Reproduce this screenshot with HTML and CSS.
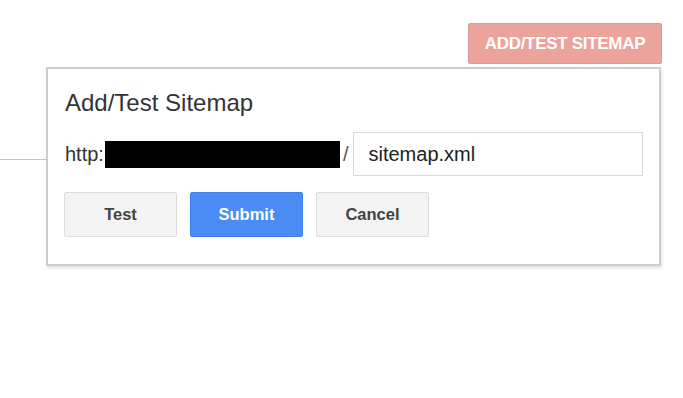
FILE: index.html
```html
<!DOCTYPE html>
<html>
<head>
<meta charset="utf-8">
<link rel="stylesheet" href="styles.css">
</head>
<body>
<div class="page">
  <div class="toolbar">
    <button class="btn-add">ADD/TEST SITEMAP</button>
  </div>
  <div class="rule"></div>
</div>
<div class="dialog">
  <div class="title">Add/Test Sitemap</div>
  <div class="url-row">
    <span class="prefix">http:</span>
    <span class="redacted"></span>
    <span class="slash">/</span>
    <input class="path" type="text" value="sitemap.xml">
  </div>
  <div class="actions">
    <button class="btn">Test</button>
    <button class="btn btn-primary">Submit</button>
    <button class="btn">Cancel</button>
  </div>
</div>
</body>
</html>
```
FILE: styles.css
```css
html, body {
  margin: 0;
  padding: 0;
  background: #fff;
  font-family: "Liberation Sans", Arial, sans-serif;
  width: 683px;
  height: 398px;
  overflow: hidden;
}
.page {
  position: relative;
  height: 398px;
}
.toolbar {
  display: flex;
  justify-content: flex-end;
  padding: 23px 21px 0 0;
}
.btn-add {
  width: 194px;
  height: 41px;
  background: #eca39b;
  border: 1px solid #e3968e;
  border-radius: 2px;
  color: #fff;
  font-family: "Liberation Sans", Arial, sans-serif;
  font-weight: bold;
  font-size: 17px;
  letter-spacing: -0.3px;
  padding: 0;
}
.rule {
  margin-top: 95px;
  width: 300px;
  height: 1px;
  background: #c4c4c4;
}
.dialog {
  position: absolute;
  left: 46px;
  top: 67px;
  width: 579px;
  border: 2px solid #cdcdcd;
  background: #fff;
  box-shadow: 1px 2px 3px rgba(0,0,0,0.12);
  padding: 20px 16px 27px 16px;
}
.title {
  font-size: 24px;
  line-height: 28px;
  color: #333;
  margin-left: 1px;
}
.url-row {
  display: flex;
  align-items: center;
  margin-top: 15px;
  height: 44px;
}
.prefix {
  font-size: 20px;
  color: #333;
  line-height: 23px;
  margin-left: 1px;
}
.redacted {
  display: block;
  width: 235px;
  height: 27px;
  background: #000;
  margin-left: 1px;
}
.slash {
  font-size: 20px;
  color: #555;
  line-height: 23px;
  margin-left: 3px;
  margin-right: 5px;
}
.path {
  flex: 1;
  box-sizing: border-box;
  height: 44px;
  border: 1px solid #d9d9d9;
  border-radius: 0;
  padding: 0 0 0 14px;
  font-family: "Liberation Sans", Arial, sans-serif;
  font-size: 20px;
  color: #222;
  outline: none;
}
.actions {
  display: flex;
  gap: 13px;
  margin-top: 16px;
}
.btn {
  width: 113px;
  height: 45px;
  box-sizing: border-box;
  background: #f3f3f3;
  border: 1px solid #dcdcdc;
  border-radius: 2px;
  color: #444;
  font-family: "Liberation Sans", Arial, sans-serif;
  font-weight: bold;
  font-size: 16.5px;
  padding: 0;
}
.btn-primary {
  background: #4b8cf4;
  border-color: #3f80ec;
  color: #fff;
}
```
